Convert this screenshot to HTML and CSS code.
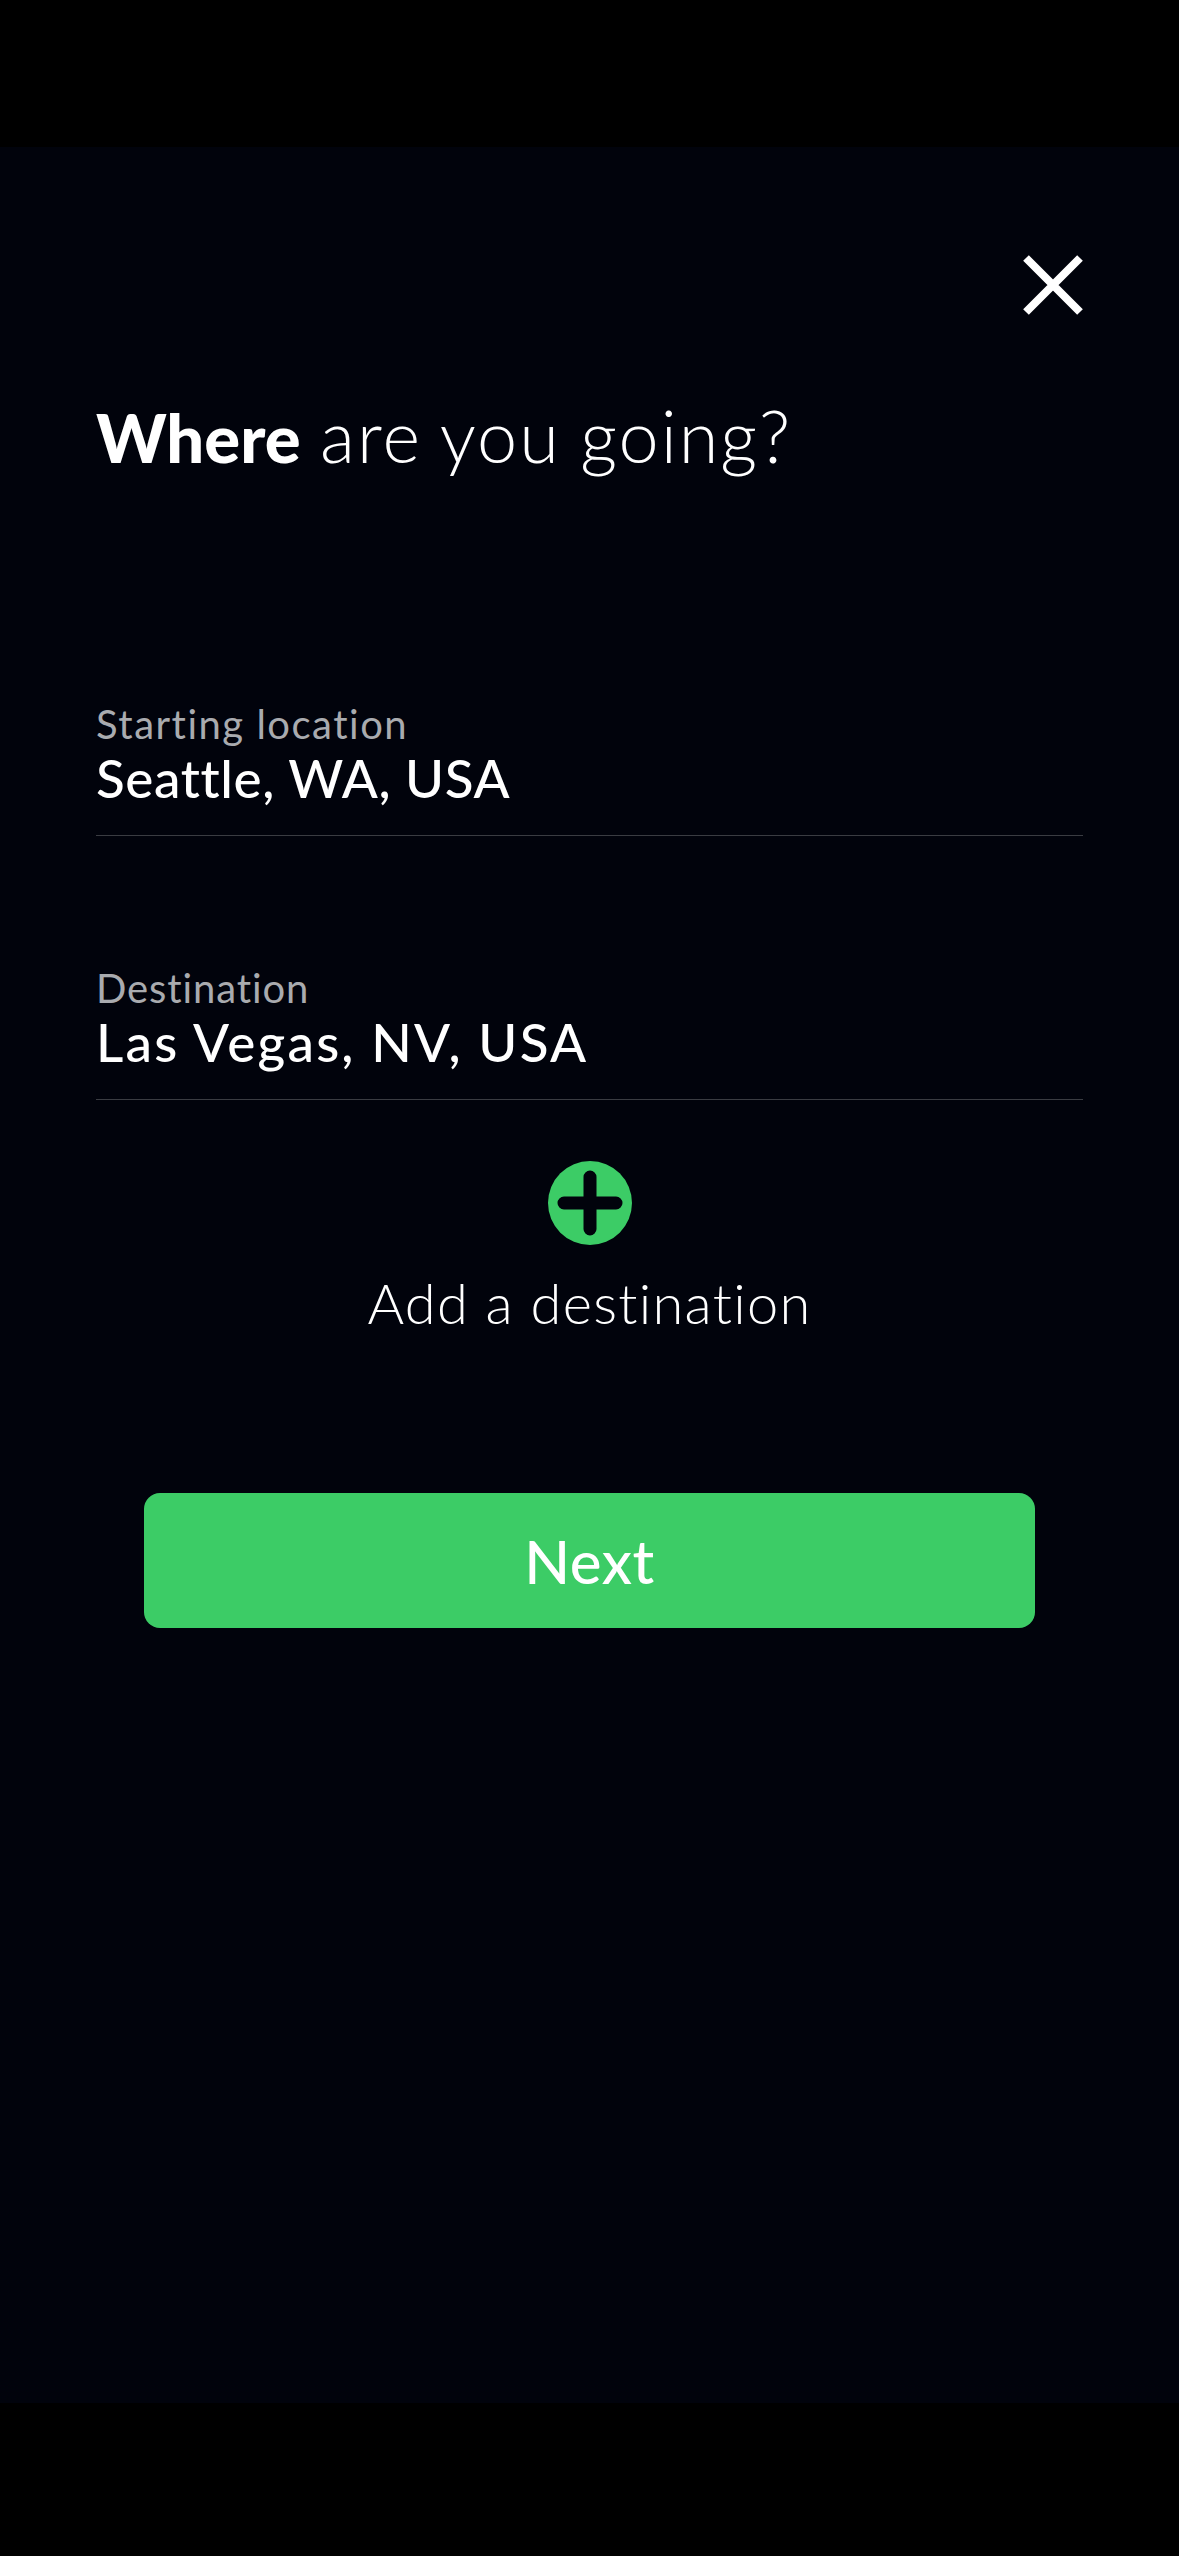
FILE: index.html
```html
<!DOCTYPE html>
<html>
<head>
    <title>Where are you going?</title>
    <link rel="stylesheet" href="styles.css">
</head>
<body>
    <div class="screen">
        <div class="close-row">
            <svg class="close" viewBox="0 0 60 60">
                <path d="M3 3L57 57M57 3L3 57" stroke="#fff" stroke-width="8" fill="none"/>
            </svg>
        </div>
        <h1 class="title"><b>Where</b> are you going?</h1>

        <div class="field field-first">
            <div class="field-label">Starting location</div>
            <div class="field-value">Seattle, WA, USA</div>
        </div>
        <div class="field">
            <div class="field-label field-label-tight">Destination</div>
            <div class="field-value field-value-wide">Las Vegas, NV, USA</div>
        </div>

        <div class="add">
            <svg class="add-icon" viewBox="0 0 84 84">
                <circle cx="42" cy="42" r="42" fill="#3ccc66"/>
                <path d="M42 16V68M16 42H68" stroke="#01030c" stroke-width="13" stroke-linecap="round"/>
            </svg>
            <div class="add-text">Add a destination</div>
        </div>

        <button class="next">Next</button>
    </div>
</body>
</html>
```

FILE: styles.css
```css
html, body {
    margin: 0;
    height: 100%;
    background-color: #000;
}
body {
    padding: 147px 0 153px;
    box-sizing: border-box;
    font-family: 'Lato', sans-serif;
    color: #fff;
}
.screen {
    height: 100%;
    background-color: #01030c;
    padding: 0 96px;
    box-sizing: border-box;
    overflow: hidden;
}
.close-row {
    display: flex;
    justify-content: flex-end;
    padding-top: 108px;
}
.close {
    display: block;
    width: 60px;
    height: 60px;
}
.title {
    margin: 80px 0 0;
    font-size: 72px;
    line-height: 80px;
    font-weight: 300;
    letter-spacing: 2px;
    word-spacing: -2px;
}
.title b {
    font-size: 67px;
    font-weight: 900;
    letter-spacing: 0;
}
.field {
    margin-top: 92px;
    border-bottom: 1px solid #3a3c42;
    height: 172px;
    box-sizing: border-box;
    padding-top: 36px;
}
.field-first {
    margin-top: 187px;
}
.field-label {
    font-size: 40px;
    line-height: 48px;
    color: #a9abaf;
    letter-spacing: 1.5px;
}
.field-label-tight {
    letter-spacing: 0.9px;
}
.field-value {
    font-size: 53px;
    line-height: 60px;
    font-weight: 500;
    letter-spacing: 0.6px;
}
.field-value-wide {
    letter-spacing: 2.2px;
}
.add {
    display: flex;
    flex-direction: column;
    align-items: center;
    margin-top: 61px;
}
.add-icon {
    display: block;
    width: 84px;
    height: 84px;
    margin-left: 1px;
}
.add-text {
    margin-top: 24px;
    font-size: 56px;
    line-height: 68px;
    font-weight: 300;
    letter-spacing: 1.3px;
}
.next {
    display: block;
    width: 891px;
    height: 135px;
    margin: 156px 0 0 48px;
    border: 0;
    border-radius: 16px;
    background-color: #3ccc66;
    color: #fff;
    font-family: inherit;
    font-size: 60px;
    font-weight: 500;
    letter-spacing: 0.5px;
}
```
